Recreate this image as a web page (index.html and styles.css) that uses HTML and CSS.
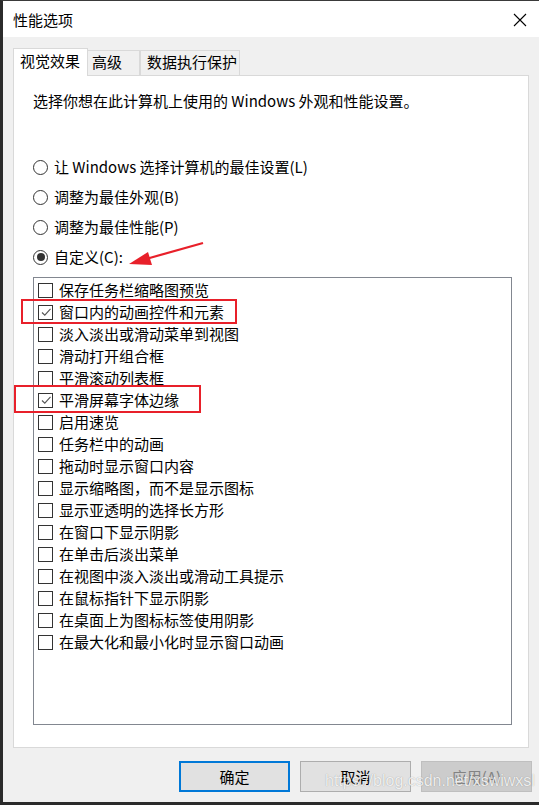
FILE: index.html
```html
<!DOCTYPE html>
<html lang="zh-CN">
<head>
    <meta charset="UTF-8">
    <meta name="viewport" content="width=device-width, initial-scale=1.0">
    <title>性能选项</title>
    <link rel="stylesheet" href="styles.css">
</head>
<body>
    <div class="window">
        <!-- Title bar -->
        <div class="titlebar">
            <span class="title">性能选项</span>
            <svg class="close" width="14" height="14" viewBox="0 0 14 14">
                <path d="M1 1 L13 13 M13 1 L1 13" stroke="#000" stroke-width="1.1" fill="none"/>
            </svg>
        </div>

        <div class="content">
            <!-- Tabs -->
            <div class="tabs">
                <div class="tab active">视觉效果</div>
                <div class="tab tab-adv">高级</div>
                <div class="tab tab-dep">数据执行保护</div>
            </div>

            <!-- Tab panel -->
            <div class="panel">
                <p class="intro">选择你想在此计算机上使用的 Windows 外观和性能设置。</p>

                <div class="radios">
                    <div class="radio-row"><span class="radio"></span>让 Windows 选择计算机的最佳设置(L)</div>
                    <div class="radio-row"><span class="radio"></span>调整为最佳外观(B)</div>
                    <div class="radio-row"><span class="radio"></span>调整为最佳性能(P)</div>
                    <div class="radio-row"><span class="radio checked"></span>自定义(C):</div>
                </div>

                <div class="listbox">
                    <div class="item"><span class="check"></span>保存任务栏缩略图预览</div>
                    <div class="item"><span class="check on"><svg width="12" height="12" viewBox="0 0 12 12"><path d="M2 6.5 L4.8 9.2 L10.5 2.8" stroke="#555" stroke-width="1.1" fill="none"/></svg></span>窗口内的动画控件和元素</div>
                    <div class="item"><span class="check"></span>淡入淡出或滑动菜单到视图</div>
                    <div class="item"><span class="check"></span>滑动打开组合框</div>
                    <div class="item"><span class="check"></span>平滑滚动列表框</div>
                    <div class="item"><span class="check on"><svg width="12" height="12" viewBox="0 0 12 12"><path d="M2 6.5 L4.8 9.2 L10.5 2.8" stroke="#555" stroke-width="1.1" fill="none"/></svg></span>平滑屏幕字体边缘</div>
                    <div class="item"><span class="check"></span>启用速览</div>
                    <div class="item"><span class="check"></span>任务栏中的动画</div>
                    <div class="item"><span class="check"></span>拖动时显示窗口内容</div>
                    <div class="item"><span class="check"></span>显示缩略图，而不是显示图标</div>
                    <div class="item"><span class="check"></span>显示亚透明的选择长方形</div>
                    <div class="item"><span class="check"></span>在窗口下显示阴影</div>
                    <div class="item"><span class="check"></span>在单击后淡出菜单</div>
                    <div class="item"><span class="check"></span>在视图中淡入淡出或滑动工具提示</div>
                    <div class="item"><span class="check"></span>在鼠标指针下显示阴影</div>
                    <div class="item"><span class="check"></span>在桌面上为图标标签使用阴影</div>
                    <div class="item"><span class="check"></span>在最大化和最小化时显示窗口动画</div>
                </div>
            </div>

            <!-- Dialog buttons -->
            <div class="buttons">
                <button class="btn btn-default">确定</button>
                <button class="btn">取消</button>
                <button class="btn btn-disabled">应用(A)</button>
            </div>
        </div>

        <!-- Annotations drawn over the dialog -->
        <div class="mark mark-1"></div>
        <div class="mark mark-2"></div>
        <svg class="arrow" width="80" height="30" viewBox="0 0 80 30">
            <path d="M75 2 L18 18" stroke="#e8202a" stroke-width="2.2" fill="none"/>
            <polygon points="1,23 20,11 24,24" fill="#e8202a"/>
        </svg>
        <div class="watermark">https://blog.csdn.net/xswiwxsl</div>
    </div>
</body>
</html>
```

FILE: styles.css
```css
/* Page */
body {
    margin: 0;
    padding: 0;
    background-color: #f0f0f0;
    font-family: "Noto Sans CJK SC", "Microsoft YaHei", sans-serif;
    font-size: 15px;
    color: #000;
}

/* Dialog window */
.window {
    position: relative;
    width: 539px;
    height: 805px;
    box-sizing: border-box;
    border-left: 3px solid #2b2b2b;
    border-top: 1px solid #3a3a3a;
    border-bottom: 3px solid #2b2b2b;
    background-color: #f0f0f0;
    display: flex;
    flex-direction: column;
    overflow: hidden;
}

/* Title bar */
.titlebar {
    height: 36px;
    background-color: #fff;
    display: flex;
    align-items: center;
    justify-content: space-between;
    padding: 0 12px 0 10px;
}

.title {
    line-height: 20px;
    margin-top: 1px;
}

.close {
    margin-top: 1px;
}

/* Main area */
.content {
    padding: 11px 10px 0 10px;
    display: flex;
    flex-direction: column;
}

/* Tabs */
.tabs {
    display: flex;
    align-items: flex-end;
    height: 27px;
    position: relative;
    z-index: 1;
}

.tab {
    box-sizing: border-box;
    height: 25px;
    line-height: 22px;
    border: 1px solid #d9d9d9;
    border-bottom: none;
    background-color: #f0f0f0;
    padding: 0 4px;
    white-space: nowrap;
}

.tab.active {
    height: 28px;
    margin-bottom: -1px;
    background-color: #fff;
    padding: 0 6px;
    width: 75px;
    line-height: 23px;
}

.tab-adv {
    width: 52px;
    border-left: none;
}

.tab-dep {
    width: 100px;
    border-left: 1px solid #d9d9d9;
    padding-left: 6px;
}

/* Tab panel */
.panel {
    box-sizing: border-box;
    height: 673px;
    background-color: #fff;
    border: 1px solid #d9d9d9;
    padding: 15px 0 0 19px;
}

.intro {
    margin: 0;
    line-height: 20px;
}

/* Radio options */
.radios {
    margin-top: 41px;
}

.radio-row {
    height: 30px;
    display: flex;
    align-items: center;
    gap: 6px;
    line-height: 20px;
}

.radio {
    width: 13px;
    height: 13px;
    border: 1px solid #333;
    border-radius: 50%;
    box-sizing: content-box;
    display: flex;
    align-items: center;
    justify-content: center;
    flex-shrink: 0;
}

.radio.checked::after {
    content: "";
    width: 8px;
    height: 8px;
    border-radius: 50%;
    background-color: #333;
}

/* Checkbox list */
.listbox {
    margin-top: 5px;
    width: 479px;
    height: 448px;
    box-sizing: border-box;
    border: 1px solid #828790;
    padding: 1px 0 0 4px;
}

.item {
    height: 22px;
    display: flex;
    align-items: center;
    gap: 6px;
    line-height: 20px;
}

.check {
    width: 13px;
    height: 13px;
    border: 1px solid #333;
    display: flex;
    align-items: center;
    justify-content: center;
    flex-shrink: 0;
}

/* Dialog buttons */
.buttons {
    display: flex;
    justify-content: flex-end;
    gap: 10px;
    margin-top: 13px;
    margin-right: -3px;
}

.btn {
    width: 111px;
    height: 31px;
    box-sizing: border-box;
    background-color: #e1e1e1;
    border: 1px solid #adadad;
    font-family: inherit;
    font-size: 15px;
    color: #000;
    padding: 0;
}

.btn-default {
    border: 2px solid #0078d7;
}

.btn-disabled {
    background-color: #cccccc;
    border-color: #bfbfbf;
    color: #838383;
}

/* Red annotation boxes */
.mark {
    position: absolute;
    border: 2px solid #e8202a;
    box-sizing: border-box;
}

.mark-1 {
    left: 18px;
    top: 298px;
    width: 216px;
    height: 25px;
}

.mark-2 {
    left: 11px;
    top: 384px;
    width: 187px;
    height: 28px;
}

.arrow {
    position: absolute;
    left: 125px;
    top: 240px;
}

/* Watermark */
.watermark {
    position: absolute;
    left: 322px;
    top: 771px;
    font-family: "Liberation Sans", Arial, sans-serif;
    font-size: 16px;
    color: rgba(255, 255, 255, 0.85);
    text-shadow: 0 0 1px rgba(0, 0, 0, 0.35);
}
```
